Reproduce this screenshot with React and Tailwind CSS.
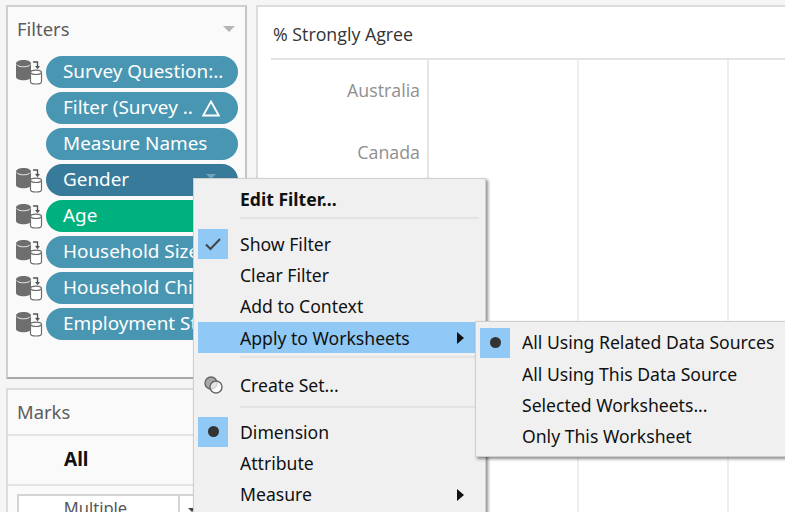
import React from 'react';

const uiFont = "font-['Noto_Sans','Open_Sans',sans-serif]";

const DbIcon = () => (
  <svg width="28" height="26" viewBox="0 0 28 26" className="shrink-0">
    <path d="M1 4.500C1 2.600 4.400 1 8.500 1S16 2.600 16 4.500V18c0 1.900-3.400 3.300-7.500 3.300S1 19.900 1 18Z" fill="#6e6e6e" />
    <path d="M1.500 5.500c1 1.500 3.700 2.300 7 2.300s6-.8 7-2.300" fill="none" stroke="#e8e8e8" strokeWidth="1" />
    <path d="M18 3h4.500v5" fill="none" stroke="#555" strokeWidth="1.400" />
    <path d="M20 7h5l-2.500 3.200Z" fill="#555" />
    <path d="M15.500 13.500c0-1.300 2.500-2.300 5.500-2.300s5.500 1 5.500 2.300v9.200c0 1.300-2.500 2.300-5.500 2.300s-5.500-1-5.500-2.300Z" fill="#fff" stroke="#6e6e6e" strokeWidth="1.200" />
    <path d="M15.500 13.800c.8 1 3 1.700 5.500 1.700s4.700-.7 5.500-1.700" fill="none" stroke="#6e6e6e" strokeWidth="1.200" />
  </svg>
);

const Pill = ({ label, icon, color = 'bg-[#4996b2]', delta, caret }) => (
  <div className="flex items-center h-8 mb-1">
    <div className="w-10 pl-[9px]">{icon && <DbIcon />}</div>
    <div className={`${color} w-[192px] h-8 rounded-full pl-[17px] pr-[18px] flex items-center justify-between text-white text-[18.900px] whitespace-nowrap overflow-hidden`}>
      <span className="pb-[2px]">{label}</span>
      {delta && (
        <svg width="18" height="17" viewBox="0 0 18 17" className="shrink-0">
          <path d="M9 1.500 16.800 15.500H1.200Z" fill="none" stroke="#fff" strokeWidth="1.800" />
        </svg>
      )}
      {caret && <span className="w-0 h-0 border-x-[5px] border-x-transparent border-t-[5px] border-t-[#6fa3bb] mr-[4px] -mt-[8px]" />}
    </div>
  </div>
);

const Chevron = () => (
  <svg width="7" height="12" viewBox="0 0 7 12">
    <path d="M0 0 7 6 0 12Z" fill="#111" />
  </svg>
);

const Mark = ({ type }) => (
  <span className="w-[30px] h-[30px] bg-[#90c8f6] flex items-center justify-center shrink-0">
    {type === 'check' ? (
      <svg width="18" height="14" viewBox="0 0 18 14">
        <path d="M2 7.500 6.500 12 16 2" fill="none" stroke="#444" strokeWidth="2" />
      </svg>
    ) : (
      <span className="w-[11px] h-[11px] rounded-full bg-[#333]" />
    )}
  </span>
);

const MenuRow = ({ label, mark, icon, arrow, bold, active }) => (
  <div className={`flex items-center h-[31.300px] ${active ? 'ml-[4px] mr-[10px] bg-[#90c8f6] pr-[11px]' : 'pl-[4px] pr-[21px]'}`}>
    <span className="w-[42px] shrink-0 flex items-center">{mark && <Mark type={mark} />}{icon}</span>
    <span className={`flex-1 whitespace-nowrap ${bold ? 'font-bold' : ''}`}>{label}</span>
    {arrow && <Chevron />}
  </div>
);

const Divider = ({ className }) => <div className={`h-[2px] bg-[#e3e3e3] ml-[46px] mr-[6px] ${className}`} />;

const SetIcon = () => (
  <span className="w-[30px] flex justify-center">
    <svg width="19" height="18" viewBox="0 0 19 18">
      <circle cx="7" cy="7" r="6" fill="#a8a8a8" stroke="#666" strokeWidth="1.400" />
      <circle cx="12" cy="11" r="6" fill="#fff" fillOpacity=".7" stroke="#666" strokeWidth="1.400" />
    </svg>
  </span>
);

export default function App() {
  return (
    <div className={`${uiFont} relative w-[785px] h-[512px] overflow-hidden bg-[#f5f5f5] flex items-start pt-[5px] pl-[6px] gap-[9px]`}>
      {/* left column */}
      <div className="w-[241px] shrink-0 flex flex-col gap-[9px]">
        <div className="h-[374px] bg-[#fafafa] border-2 border-[#cfcfcf] border-b-[#a8a8a8] border-r-[#c4c4c4]">
          <div className="flex items-center justify-between h-[47px] pl-[9px] pr-[10px] pb-[3px] text-[18.400px] text-[#5c5c5c]">
            <span>Filters</span>
            <span className="w-0 h-0 border-x-[6px] border-x-transparent border-t-[6px] border-t-[#b5b5b5] -mt-[1px]" />
          </div>
          <div className="-ml-[2px] pt-[2px]">
            <Pill label="Survey Question:.." icon />
            <Pill label="Filter (Survey .." delta />
            <Pill label="Measure Names" />
            <Pill label="Gender" icon color="bg-[#387a9a]" caret />
            <Pill label="Age" icon color="bg-[#00b17f]" />
            <Pill label="Household Size" icon />
            <Pill label="Household Children" icon />
            <Pill label="Employment Status" icon />
          </div>
        </div>
        <div className="h-[130px] bg-[#fafafa] border-2 border-[#dcdcdc]">
          <div className="h-[46px] pl-[9px] flex items-center text-[18.400px] text-[#5c5c5c] border-b-2 border-[#e3e3e3]">Marks</div>
          <div className="h-[50px] pl-[56px] pb-[2px] flex items-center text-[19px] font-bold text-[#111] border-b-2 border-[#e3e3e3]">All</div>
          <div className="ml-[9px] mt-[8px] w-[210px] h-[30px] border-2 border-[#d4d4d4] bg-white flex items-start">
            <div className="w-[161px] h-full border-r-2 border-[#d4d4d4] text-[#555] text-[16.500px] text-center pr-[6px] leading-[24px]">Multiple</div>
            <span className="w-0 h-0 ml-[8px] mt-[12px] border-x-[4px] border-x-transparent border-t-[4px] border-t-[#444]" />
          </div>
        </div>
      </div>

      {/* chart panel */}
      <div className="flex-1 h-[520px] bg-white border-2 border-[#dcdcdc] border-r-0 pl-[13px] font-['Open_Sans',sans-serif]">
        <div className="h-[53px] pl-[2px] pt-[3px] flex items-center text-[17.800px] text-[#333] border-b-2 border-[#e3e3e3]">% Strongly Agree</div>
        <div className="flex h-full">
          <div className="w-[158px] border-r-2 border-[#e6e6e6] pr-[7px] text-right text-[17.800px] text-[#8f8f8f]">
            <div className="h-[62px] pt-[17px]">Australia</div>
            <div className="h-[62px] pt-[17px]">Canada</div>
          </div>
          <div className="w-[150px] border-r-2 border-[#efefef]" />
          <div className="w-[150px] border-r-2 border-[#efefef]" />
        </div>
      </div>

      {/* context menu */}
      <div className="absolute left-[193px] top-[178px] w-[293px] h-[340px] bg-[#f0f0f0] border border-[#cfcfcf] shadow-[2px_2px_3px_rgba(0,0,0,0.45)] text-[17.600px] text-[#111] pt-[5px]">
        <MenuRow label="Edit Filter..." bold />
        <Divider className="mt-[2px] mb-[9px]" />
        <MenuRow label="Show Filter" mark="check" />
        <MenuRow label="Clear Filter" />
        <MenuRow label="Add to Context" />
        <MenuRow label="Apply to Worksheets" arrow active />
        <Divider className="mt-[3px] mb-[11px]" />
        <MenuRow label="Create Set..." icon={<SetIcon />} />
        <Divider className="mt-[5px] mb-[8.500px]" />
        <MenuRow label="Dimension" mark="dot" />
        <MenuRow label="Attribute" />
        <MenuRow label="Measure" arrow />
      </div>

      {/* submenu */}
      <div className="absolute left-[475px] top-[321px] w-[320px] h-[136px] bg-[#f0f0f0] border border-[#cfcfcf] shadow-[2px_2px_3px_rgba(0,0,0,0.45)] text-[17.600px] text-[#111] pt-[5px]">
        <MenuRow label="All Using Related Data Sources" mark="dot" />
        <MenuRow label="All Using This Data Source" />
        <MenuRow label="Selected Worksheets..." />
        <MenuRow label="Only This Worksheet" />
      </div>
    </div>
  );
}
